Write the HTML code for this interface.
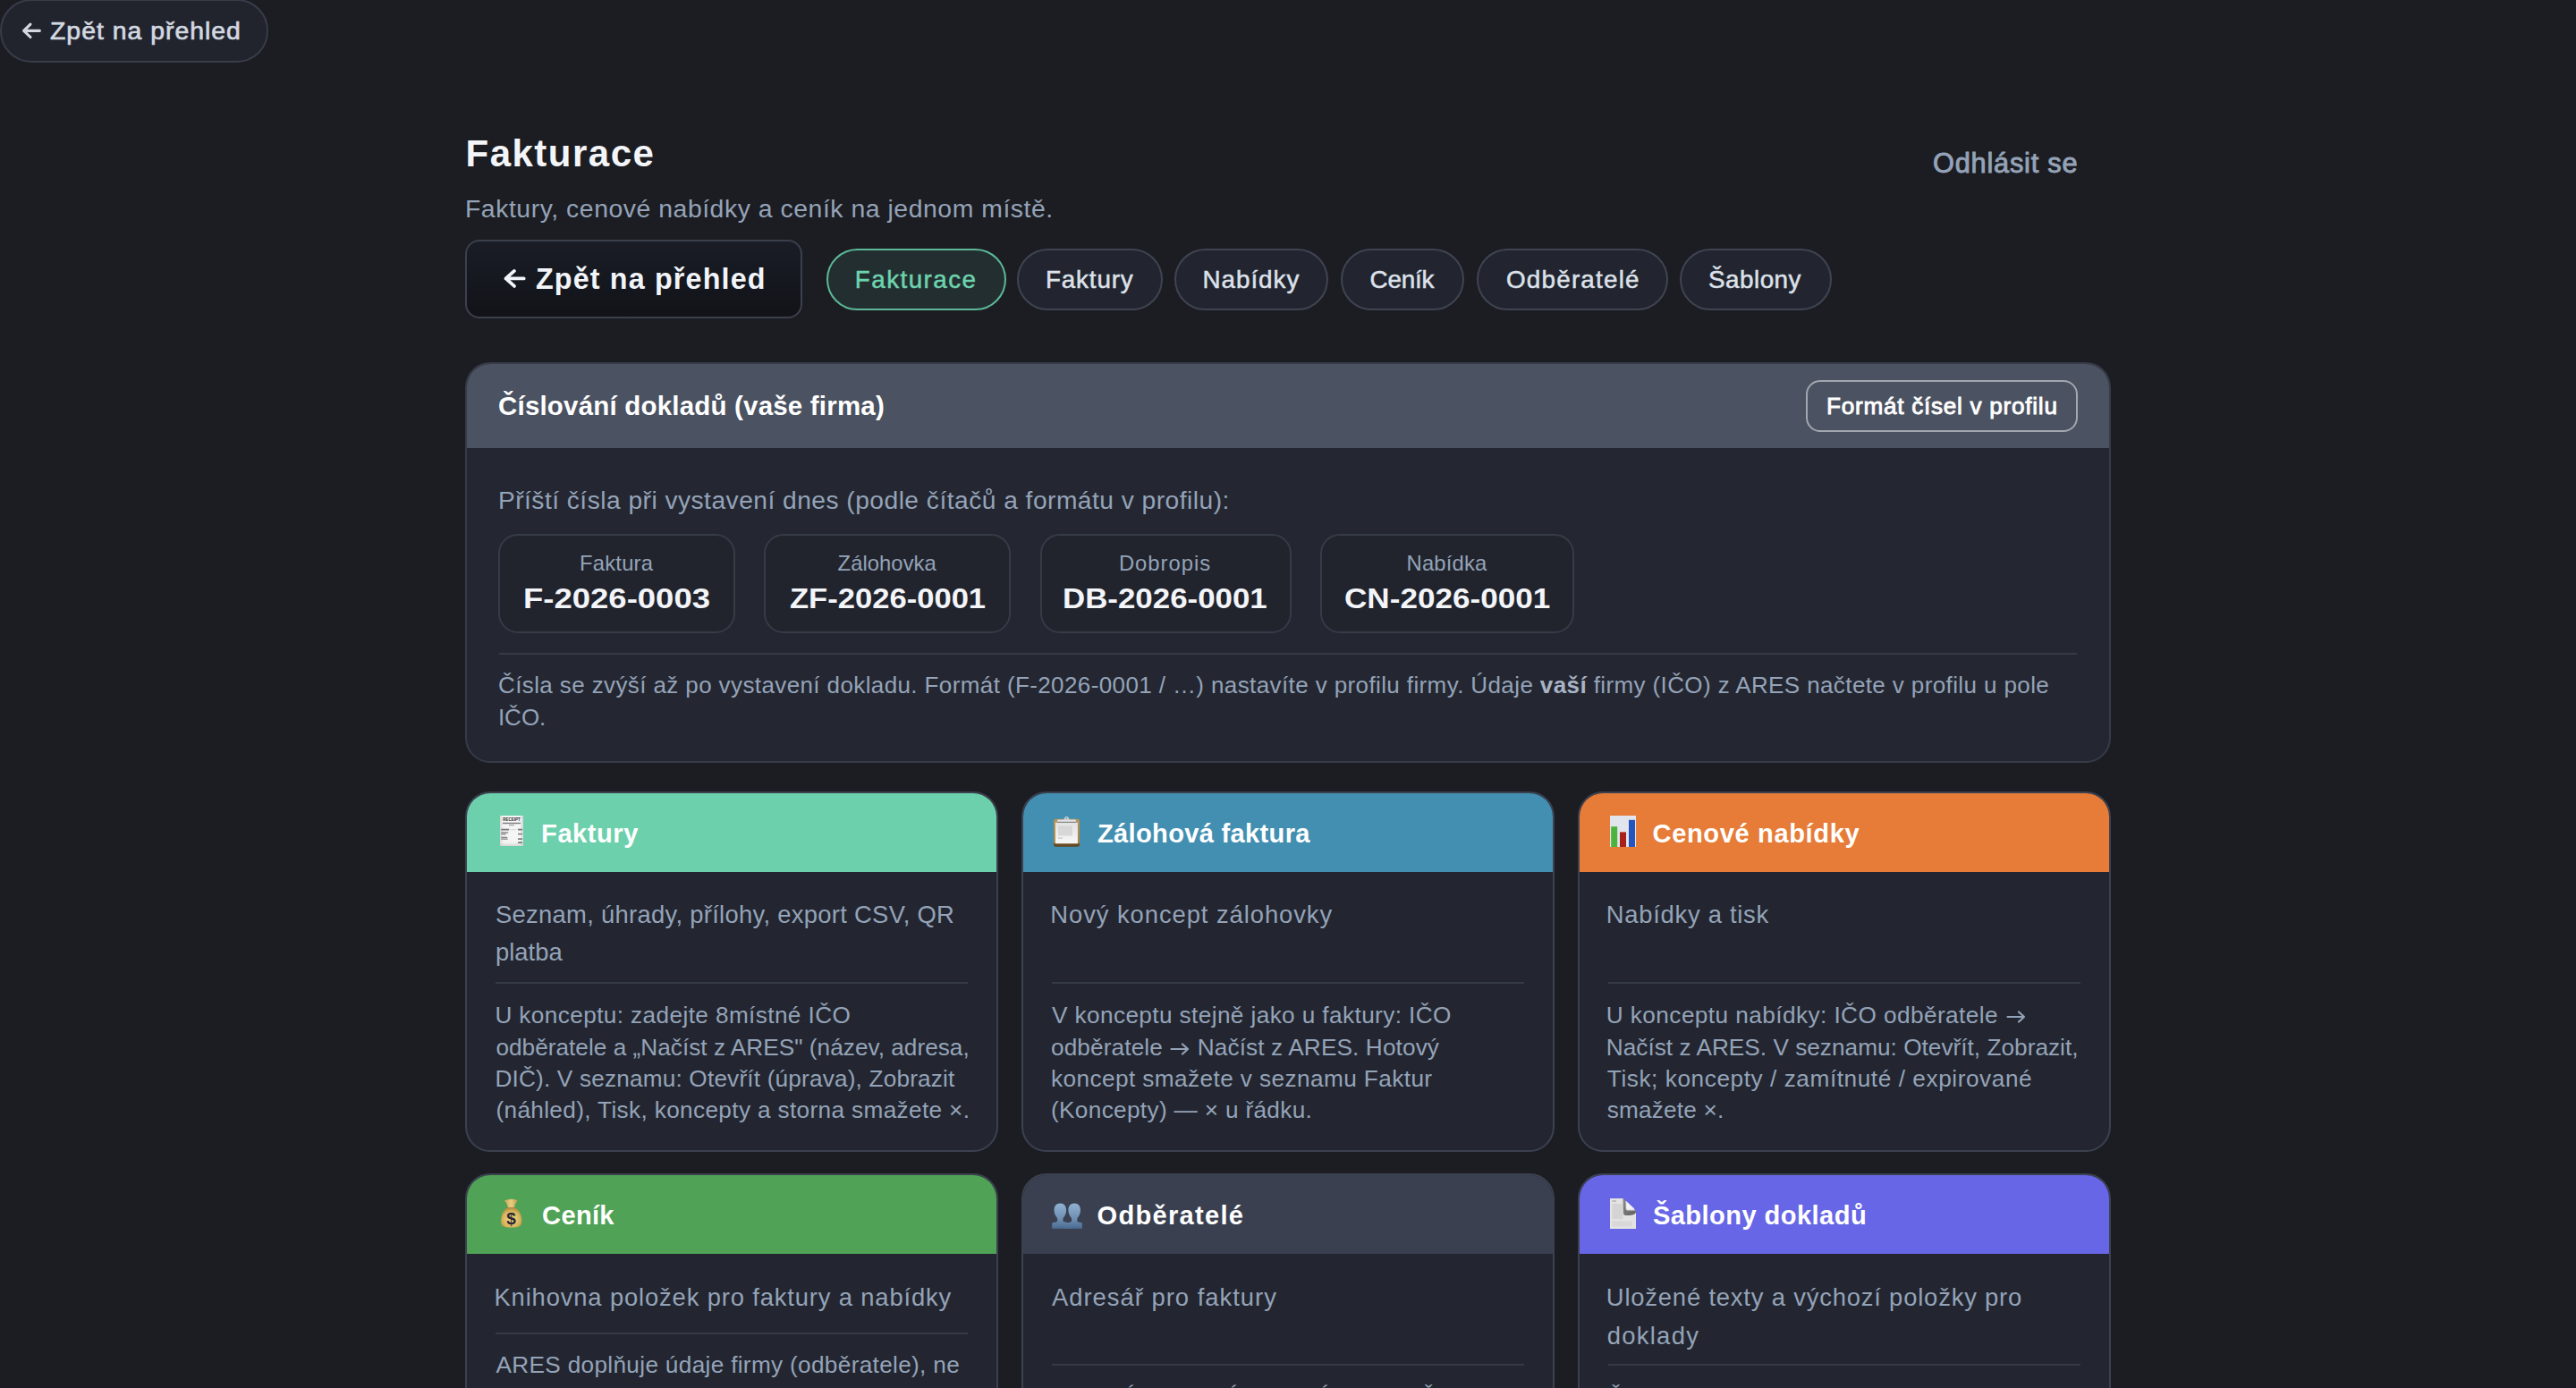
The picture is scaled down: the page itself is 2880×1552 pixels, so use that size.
<!DOCTYPE html>
<html lang="cs">
<head>
<meta charset="utf-8">
<title>Fakturace</title>
<style>
html,body{margin:0;padding:0;}
body{width:2880px;height:1552px;overflow:hidden;background:#1c1d22;font-family:"Liberation Sans",sans-serif;position:relative;}
.a{position:absolute;box-sizing:border-box;}
.x{position:absolute;white-space:nowrap;}
.pill{left:0;top:-1px;width:300px;height:71px;border:2px solid #373c49;border-radius:35px;background:#21242d;}
.backbtn{left:520px;top:268px;width:377px;height:88px;border:2px solid #3b404d;border-radius:16px;background:linear-gradient(180deg,#1a1d26 0%,#111318 100%);}
.tab{top:278px;height:69px;border:2px solid #3f4452;border-radius:35px;background:#22252f;}
.tab.on{background:#232e30;border-color:#5db897;}
.ncard{left:520px;top:405px;width:1840px;height:448px;border:2px solid #363b47;border-radius:28px;background:#242731;overflow:hidden;}
.nhead{left:0;top:0;width:100%;height:94px;background:#4b5261;}
.fmtbtn{left:2019px;top:425px;width:304px;height:57.5px;border:2px solid #a2a7b0;border-radius:16px;}
.nbox{top:597.2px;height:110.4px;border:2px solid #363b48;border-radius:22px;background:#21242d;}
.div{height:2px;background:#353a47;}
.card{width:596.27px;border:2px solid #3c4150;border-radius:28px;background:#232630;overflow:hidden;}
.card .h{position:absolute;left:0;top:0;width:100%;}

#pill{left:56px;top:17.11px;font-size:28.4px;line-height:35.5px;color:#d3d8e0;-webkit-text-stroke:0.7px #d3d8e0;letter-spacing:1px;}
#title{left:520.5px;top:146.1px;font-size:42px;line-height:52.5px;color:#f3f5f9;font-weight:bold;letter-spacing:1.5px;}
#sub{left:520px;top:216.31px;font-size:28.4px;line-height:35.5px;color:#94a3b8;letter-spacing:0.53px;}
#logout{left:2161px;top:164.27px;font-size:30.7px;line-height:38.38px;color:#94a3b8;-webkit-text-stroke:0.9px #94a3b8;letter-spacing:0.8px;}
#back{left:598.9px;top:292.42px;font-size:32.3px;line-height:40.38px;color:#f1f4f8;font-weight:bold;letter-spacing:1.16px;}
#tab0{left:955.8px;top:295.89px;font-size:27.8px;line-height:34.75px;color:#6dd3ae;-webkit-text-stroke:0.5px #6dd3ae;letter-spacing:1.45px;}
#tab1{left:1169px;top:295.89px;font-size:27.8px;line-height:34.75px;color:#dde1ea;-webkit-text-stroke:0.5px #dde1ea;letter-spacing:0.83px;}
#tab2{left:1344.5px;top:295.89px;font-size:27.8px;line-height:34.75px;color:#dde1ea;-webkit-text-stroke:0.5px #dde1ea;letter-spacing:0.97px;}
#tab3{left:1531.6px;top:295.89px;font-size:27.8px;line-height:34.75px;color:#dde1ea;-webkit-text-stroke:0.5px #dde1ea;letter-spacing:-0.2px;}
#tab4{left:1684px;top:295.89px;font-size:27.8px;line-height:34.75px;color:#dde1ea;-webkit-text-stroke:0.5px #dde1ea;letter-spacing:1.22px;}
#tab5{left:1910px;top:295.89px;font-size:27.8px;line-height:34.75px;color:#dde1ea;-webkit-text-stroke:0.5px #dde1ea;letter-spacing:0.5px;}
#nhead{left:557px;top:435.94px;font-size:29.5px;line-height:36.88px;color:#ffffff;font-weight:bold;letter-spacing:0.19px;}
#fmt{left:2042px;top:437.55px;font-size:26.1px;line-height:32.62px;color:#ffffff;-webkit-text-stroke:0.9px #ffffff;letter-spacing:0.75px;}
#nlabel{left:556.9px;top:541.5px;font-size:28.2px;line-height:35.25px;color:#94a3b8;letter-spacing:0.47px;}
#bl0{left:648.1px;top:614.68px;font-size:23.8px;line-height:29.75px;color:#94a3b8;letter-spacing:0.2px;}
#bn0{left:584.9px;top:650.78px;font-size:31px;line-height:38.75px;color:#f3f5f9;font-weight:bold;transform:scaleX(1.1773);transform-origin:0 0;}
#bl1{left:936.6px;top:614.68px;font-size:23.8px;line-height:29.75px;color:#94a3b8;letter-spacing:0.05px;}
#bn1{left:882.7px;top:650.78px;font-size:31px;line-height:38.75px;color:#f3f5f9;font-weight:bold;transform:scaleX(1.1153);transform-origin:0 0;}
#bl2{left:1250.9px;top:614.68px;font-size:23.8px;line-height:29.75px;color:#94a3b8;letter-spacing:1px;}
#bn2{left:1188px;top:650.78px;font-size:31px;line-height:38.75px;color:#f3f5f9;font-weight:bold;transform:scaleX(1.1248);transform-origin:0 0;}
#bl3{left:1572.5px;top:614.68px;font-size:23.8px;line-height:29.75px;color:#94a3b8;letter-spacing:0.2px;}
#bn3{left:1502.6px;top:650.78px;font-size:31px;line-height:38.75px;color:#f3f5f9;font-weight:bold;transform:scaleX(1.1321);transform-origin:0 0;}
#nn1{left:557px;top:749.54px;font-size:26px;line-height:32.5px;color:#94a3b8;letter-spacing:0.39px;}
#nn2{left:556.9px;top:785.54px;font-size:26px;line-height:32.5px;color:#94a3b8;}
#c1t0{left:605.1px;top:913.53px;font-size:29.1px;line-height:36.38px;color:#ffffff;font-weight:bold;letter-spacing:0.53px;}
#c1t1{left:1227px;top:913.53px;font-size:29.1px;line-height:36.38px;color:#ffffff;font-weight:bold;letter-spacing:0.31px;}
#c1t2{left:1847.5px;top:913.53px;font-size:29.1px;line-height:36.38px;color:#ffffff;font-weight:bold;letter-spacing:0.62px;}
#c1d0_0{left:554px;top:1005.98px;font-size:27.4px;line-height:34.25px;color:#94a3b8;letter-spacing:0.29px;}
#c1d0_1{left:554px;top:1048.48px;font-size:27.4px;line-height:34.25px;color:#94a3b8;}
#c1d1_0{left:1174.3px;top:1005.98px;font-size:27.4px;line-height:34.25px;color:#94a3b8;letter-spacing:0.93px;}
#c1d2_0{left:1795.8px;top:1005.98px;font-size:27.4px;line-height:34.25px;color:#94a3b8;letter-spacing:0.72px;}
#c1n0_0{left:553.4px;top:1119.35px;font-size:26.2px;line-height:32.75px;color:#94a3b8;letter-spacing:0.39px;}
#c1n0_1{left:554.4px;top:1154.72px;font-size:26.2px;line-height:32.75px;color:#94a3b8;letter-spacing:0.02px;}
#c1n0_2{left:553.4px;top:1190.09px;font-size:26.2px;line-height:32.75px;color:#94a3b8;letter-spacing:0.18px;}
#c1n0_3{left:554.4px;top:1225.46px;font-size:26.2px;line-height:32.75px;color:#94a3b8;letter-spacing:0.35px;}
#c1n1_0{left:1176px;top:1119.35px;font-size:26.2px;line-height:32.75px;color:#94a3b8;letter-spacing:0.39px;}
#c1n1_1{left:1175px;top:1154.72px;font-size:26.2px;line-height:32.75px;color:#94a3b8;letter-spacing:0.12px;}
#c1n1_2{left:1175px;top:1190.09px;font-size:26.2px;line-height:32.75px;color:#94a3b8;letter-spacing:0.41px;}
#c1n1_3{left:1175px;top:1225.46px;font-size:26.2px;line-height:32.75px;color:#94a3b8;letter-spacing:0.33px;}
#c1n2_0{left:1795.8px;top:1119.35px;font-size:26.2px;line-height:32.75px;color:#94a3b8;letter-spacing:0.43px;}
#c1n2_1{left:1795.8px;top:1154.72px;font-size:26.2px;line-height:32.75px;color:#94a3b8;letter-spacing:0.02px;}
#c1n2_2{left:1796.8px;top:1190.09px;font-size:26.2px;line-height:32.75px;color:#94a3b8;letter-spacing:0.57px;}
#c1n2_3{left:1796.8px;top:1225.46px;font-size:26.2px;line-height:32.75px;color:#94a3b8;letter-spacing:0.18px;}
#c2t0{left:606.1px;top:1340.63px;font-size:29.1px;line-height:36.38px;color:#ffffff;font-weight:bold;letter-spacing:0.3px;}
#c2t1{left:1226.5px;top:1340.63px;font-size:29.1px;line-height:36.38px;color:#ffffff;font-weight:bold;letter-spacing:1.27px;}
#c2t2{left:1847.9px;top:1340.63px;font-size:29.1px;line-height:36.38px;color:#ffffff;font-weight:bold;letter-spacing:0.43px;}
#c2d0_0{left:552.5px;top:1434.28px;font-size:27.4px;line-height:34.25px;color:#94a3b8;letter-spacing:0.84px;}
#c2d1_0{left:1176px;top:1434.28px;font-size:27.4px;line-height:34.25px;color:#94a3b8;letter-spacing:1px;}
#c2d2_0{left:1795.8px;top:1434.28px;font-size:27.4px;line-height:34.25px;color:#94a3b8;letter-spacing:0.81px;}
#c2d2_1{left:1796.8px;top:1476.78px;font-size:27.4px;line-height:34.25px;color:#94a3b8;letter-spacing:1.27px;}
#c2n0_0{left:554.5px;top:1510.05px;font-size:26.2px;line-height:32.75px;color:#94a3b8;letter-spacing:0.32px;}
#c2n1_0{left:1176px;top:1546.45px;font-size:26.2px;line-height:32.75px;color:#94a3b8;}
#c2n2_0{left:1797.4px;top:1546.45px;font-size:26.2px;line-height:32.75px;color:#94a3b8;}
</style>
</head>
<body>

<div class="a pill"></div>
<div class="a backbtn"></div>
<div class="a tab on" style="left:924px;width:200.5px"></div>
<div class="a tab" style="left:1137px;width:163px"></div>
<div class="a tab" style="left:1313px;width:172px"></div>
<div class="a tab" style="left:1499px;width:138px"></div>
<div class="a tab" style="left:1651px;width:214px"></div>
<div class="a tab" style="left:1877.7px;width:170.3px"></div>
<div class="a ncard"><div class="a nhead"></div><div class="a div" style="left:36px;top:323px;width:1764px"></div></div>
<div class="a fmtbtn"></div>
<div class="a nbox" style="left:557.2px;width:264.7px"></div>
<div class="a nbox" style="left:854.3px;width:275.3px"></div>
<div class="a nbox" style="left:1162.5px;width:281.1px"></div>
<div class="a nbox" style="left:1476.4px;width:284.1px"></div>
<div class="a card" style="left:520px;top:885px;height:403px"><div class="h" style="height:88px;background:#6dd0ad"></div><div class="a div" style="left:32px;top:211px;width:528px"></div></div>
<div class="a card" style="left:1141.87px;top:885px;height:403px"><div class="h" style="height:88px;background:#428fb1"></div><div class="a div" style="left:32px;top:211px;width:528px"></div></div>
<div class="a card" style="left:1763.73px;top:885px;height:403px"><div class="h" style="height:88px;background:#e67c37"></div><div class="a div" style="left:32px;top:211px;width:528px"></div></div>
<div class="a card" style="left:520px;top:1312px;height:420px"><div class="h" style="height:88px;background:#4fa256"></div><div class="a div" style="left:32px;top:176px;width:528px"></div></div>
<div class="a card" style="left:1141.87px;top:1312px;height:420px"><div class="h" style="height:88px;background:#3a4050"></div><div class="a div" style="left:32px;top:211px;width:528px"></div></div>
<div class="a card" style="left:1763.73px;top:1312px;height:420px"><div class="h" style="height:88px;background:#6766e6"></div><div class="a div" style="left:32px;top:211px;width:528px"></div></div>
<svg class="x" style="left:20px;top:20px" width="30" height="30" viewBox="0 0 30 30"><path d="M6.6 14.35H24.4M14 7.2L6.6 14.35L14 21.5" fill="none" stroke="#d3d8e0" stroke-width="3.1" stroke-linecap="round" stroke-linejoin="round"/></svg>
<svg class="x" style="left:560px;top:296px" width="30" height="30" viewBox="0 0 30 30"><path d="M5.5 15.4H25.7M15 6.9L5.5 15.4L15 23.9" fill="none" stroke="#f1f4f8" stroke-width="3.8" stroke-linecap="round" stroke-linejoin="round"/></svg>
<svg class="x" style="left:559.3px;top:912.4px" width="26" height="34" viewBox="0 0 26 34">
<defs><linearGradient id="rcg" x1="0" x2="1" y1="0" y2="0"><stop offset="0" stop-color="#d9d9d9"/><stop offset="0.15" stop-color="#f4f4f4"/><stop offset="0.85" stop-color="#f6f6f6"/><stop offset="1" stop-color="#d4d4d4"/></linearGradient>
<linearGradient id="rcv" x1="0" x2="0" y1="0" y2="1"><stop offset="0" stop-color="#fff" stop-opacity="0"/><stop offset="0.8" stop-color="#fff" stop-opacity="0"/><stop offset="1" stop-color="#bdbdbd" stop-opacity="0.6"/></linearGradient></defs>
<rect x="0" y="0" width="26" height="34" fill="url(#rcg)"/>
<rect x="0" y="0" width="26" height="34" fill="url(#rcv)"/>
<text x="13" y="6.4" text-anchor="middle" font-family="Liberation Sans" font-weight="bold" font-size="5" textLength="19.5" lengthAdjust="spacingAndGlyphs" fill="#2e2e2e">RECEIPT</text>
<rect x="3" y="7.8" width="20" height="1.4" fill="#7a7a7a"/>
<rect x="10" y="10.3" width="6" height="0.9" fill="#8a8a8a"/>
<rect x="1.2" y="14.7" width="9" height="1.8" fill="#7a7a7a"/><rect x="11.5" y="15.6" width="7" height="0.5" fill="#bbb"/><rect x="20" y="14.7" width="5" height="1.8" fill="#7a7a7a"/>
<rect x="1.2" y="18.2" width="8" height="1.4" fill="#8a8a8a"/><rect x="1.2" y="20" width="5.5" height="1.3" fill="#8a8a8a"/><rect x="20" y="19.8" width="5" height="1.5" fill="#7a7a7a"/>
<rect x="1.2" y="23.7" width="7" height="1.4" fill="#8a8a8a"/><rect x="1.2" y="25.5" width="7.5" height="1.3" fill="#8a8a8a"/><rect x="20" y="25.3" width="5" height="1.6" fill="#7a7a7a"/>
<rect x="20" y="29.3" width="5" height="1.7" fill="#7a7a7a"/>
</svg>
<svg class="x" style="left:1178px;top:911.5px" width="29" height="35" viewBox="0 0 29 35">
<defs><linearGradient id="cbg" x1="0" x2="0" y1="0" y2="1"><stop offset="0" stop-color="#b99457"/><stop offset="0.85" stop-color="#a98445"/><stop offset="0.9" stop-color="#6e4f25"/><stop offset="1" stop-color="#5f4320"/></linearGradient>
<linearGradient id="cpg" x1="0" x2="0" y1="0" y2="1"><stop offset="0" stop-color="#e2e2e2"/><stop offset="1" stop-color="#f7f7f7"/></linearGradient></defs>
<rect x="0" y="3.8" width="29" height="31" rx="2.5" fill="url(#cbg)"/>
<rect x="1.9" y="7.7" width="25" height="23.5" fill="url(#cpg)"/>
<rect x="5" y="11.5" width="16" height="11" fill="#cfcfcf" opacity="0.7"/>
<rect x="5" y="24.5" width="5" height="1.2" fill="#c4c4c4"/>
<path d="M11 4.5 L13 1.5 A1.8 1.8 0 0 1 16 1.5 L18 4.5 Z" fill="#cdd2da"/>
<circle cx="14.5" cy="2.6" r="0.8" fill="#4d8fb3"/>
<rect x="4" y="4.4" width="21" height="3.3" rx="1" fill="#dfe3ea"/>
<rect x="4" y="6.8" width="21" height="1.2" fill="#8a8580"/>
</svg>
<svg class="x" style="left:1800px;top:912px" width="29" height="35" viewBox="0 0 29 35">
<defs><linearGradient id="chg" x1="0" x2="1" y1="0" y2="1"><stop offset="0" stop-color="#dfe4ee"/><stop offset="1" stop-color="#e6e6ea"/></linearGradient></defs>
<rect x="0" y="0" width="29" height="35" fill="url(#chg)"/>
<rect x="1.2" y="12.2" width="7" height="22.8" fill="#4cb33c"/>
<rect x="11" y="18.4" width="7" height="16.6" fill="#a7221a"/>
<rect x="21" y="4.8" width="7" height="30.2" fill="#2455bf"/>
</svg>
<svg class="x" style="left:559px;top:1339.5px" width="26" height="33" viewBox="0 0 26 33">
<defs><radialGradient id="mbg" cx="0.5" cy="0.6" r="0.6"><stop offset="0" stop-color="#f3dc82"/><stop offset="0.7" stop-color="#d6b35c"/><stop offset="1" stop-color="#ad8540"/></radialGradient>
<linearGradient id="mtg" x1="0" x2="1"><stop offset="0" stop-color="#c9a35a"/><stop offset="0.5" stop-color="#e9cf80"/><stop offset="1" stop-color="#c29a50"/></linearGradient></defs>
<path d="M9 10.3 C8.5 7.5 7 4.5 4.8 2.2 L9.5 1.3 L13 0.8 L16.5 1.3 L19.7 2.2 C18 4.5 16.4 7.5 16 10.3 Z" fill="url(#mtg)"/>
<path d="M9 10 C4 12 1 18.5 1 26.5 C1 31 4 32.5 12.7 32.5 C21.5 32.5 24.4 31 24.4 26.5 C24.4 18.5 21.5 12 16 10 Z" fill="url(#mbg)"/>
<text x="12.5" y="29" text-anchor="middle" font-family="Liberation Sans" font-weight="bold" font-size="19" fill="#2a2433">$</text>
</svg>
<svg class="x" style="left:1175.5px;top:1345px" width="34" height="29" viewBox="0 0 34 29">
<defs><linearGradient id="bsg" gradientUnits="userSpaceOnUse" x1="0" x2="0" y1="0" y2="29"><stop offset="0" stop-color="#92b3d3"/><stop offset="0.6" stop-color="#6f8fb3"/><stop offset="1" stop-color="#4a6a91"/></linearGradient></defs>
<g fill="url(#bsg)">
<path d="M9.3 0.6C13.6 0.6 16.1 3.6 16.1 8.2C16.1 11.6 14.6 14.6 12.6 17L12.4 20.4C14.2 21.4 17 21.8 20 22L21.5 28.7H0.2V23.2C0.2 22.3 1 22 2 21.9C4 21.7 5.9 21.2 6.2 20.4L6 17C4 14.6 2.5 11.6 2.5 8.2C2.5 3.6 5 0.6 9.3 0.6Z"/>
<path d="M25.2 0.6C29.5 0.6 32 3.6 32 8.2C32 11.6 30.5 14.6 28.5 17L28.3 20.4C28.6 21.2 30.5 21.7 32.2 21.9C33.2 22 33.9 22.3 33.9 23.2V28.7H12.5L14 23C16.5 22.3 21.5 21.6 22.1 20.4L21.9 17C19.9 14.6 18.4 11.6 18.4 8.2C18.4 3.6 20.9 0.6 25.2 0.6Z"/>
</g>
</svg>
<svg class="x" style="left:1800px;top:1339.5px" width="29" height="34" viewBox="0 0 29 34">
<defs><linearGradient id="pcg" x1="0" x2="1" y1="0" y2="1"><stop offset="0" stop-color="#7a7a7a"/><stop offset="1" stop-color="#4a4a4a"/></linearGradient></defs>
<path d="M0 0 H14.5 L29 14 V34 H0 Z" fill="#e3e3e3"/>
<rect x="2.5" y="2.5" width="4.5" height="1" fill="#9a9a9a"/>
<rect x="2.5" y="6" width="12" height="17" fill="#c9c9c9" opacity="0.55"/>
<rect x="2.5" y="25.5" width="22" height="6" fill="#cdcdcd" opacity="0.5"/>
<path d="M14.5 0 C17 0.5 17.6 2.5 17.6 5 V11 C17.6 12.5 18.5 13.6 20.5 13.6 H29 V14.5 C29 18 25 19 20 19 H17.5 C16 19 15 18 15 16.5 Z" fill="url(#pcg)" opacity="0.85"/>
<path d="M18.2 3 L27.5 11.8 L19 11.8 Z" fill="#f3f3f3"/>
</svg>

<div class="x" id="pill">Zpět na přehled</div>
<div class="x" id="title">Fakturace</div>
<div class="x" id="sub">Faktury, cenové nabídky a ceník na jednom místě.</div>
<div class="x" id="logout">Odhlásit se</div>
<div class="x" id="back">Zpět na přehled</div>
<div class="x" id="tab0">Fakturace</div>
<div class="x" id="tab1">Faktury</div>
<div class="x" id="tab2">Nabídky</div>
<div class="x" id="tab3">Ceník</div>
<div class="x" id="tab4">Odběratelé</div>
<div class="x" id="tab5">Šablony</div>
<div class="x" id="nhead">Číslování dokladů (vaše firma)</div>
<div class="x" id="fmt">Formát čísel v profilu</div>
<div class="x" id="nlabel">Příští čísla při vystavení dnes (podle čítačů a formátu v profilu):</div>
<div class="x" id="bl0">Faktura</div>
<div class="x" id="bn0">F-2026-0003</div>
<div class="x" id="bl1">Zálohovka</div>
<div class="x" id="bn1">ZF-2026-0001</div>
<div class="x" id="bl2">Dobropis</div>
<div class="x" id="bn2">DB-2026-0001</div>
<div class="x" id="bl3">Nabídka</div>
<div class="x" id="bn3">CN-2026-0001</div>
<div class="x" id="nn1">Čísla se zvýší až po vystavení dokladu. Formát (F-2026-0001 / …) nastavíte v profilu firmy. Údaje <b style="color:#a8b3c5">vaší</b> firmy (IČO) z ARES načtete v profilu u pole</div>
<div class="x" id="nn2">IČO.</div>
<div class="x" id="c1t0">Faktury</div>
<div class="x" id="c1t1">Zálohová faktura</div>
<div class="x" id="c1t2">Cenové nabídky</div>
<div class="x" id="c1d0_0">Seznam, úhrady, přílohy, export CSV, QR</div>
<div class="x" id="c1d0_1">platba</div>
<div class="x" id="c1d1_0">Nový koncept zálohovky</div>
<div class="x" id="c1d2_0">Nabídky a tisk</div>
<div class="x" id="c1n0_0">U konceptu: zadejte 8místné IČO</div>
<div class="x" id="c1n0_1">odběratele a „Načíst z ARES" (název, adresa,</div>
<div class="x" id="c1n0_2">DIČ). V seznamu: Otevřít (úprava), Zobrazit</div>
<div class="x" id="c1n0_3">(náhled), Tisk, koncepty a storna smažete ×.</div>
<div class="x" id="c1n1_0">V konceptu stejně jako u faktury: IČO</div>
<div class="x" id="c1n1_1">odběratele <svg width="22" height="14" viewBox="0 0 22 14" style="vertical-align:0px;margin:0 1px"><path d="M1.5 7H20M14 1.5L20 7L14 12.5" fill="none" stroke="#94a3b8" stroke-width="2.2" stroke-linecap="round" stroke-linejoin="round"/></svg> Načíst z ARES. Hotový</div>
<div class="x" id="c1n1_2">koncept smažete v seznamu Faktur</div>
<div class="x" id="c1n1_3">(Koncepty) — × u řádku.</div>
<div class="x" id="c1n2_0">U konceptu nabídky: IČO odběratele <svg width="22" height="14" viewBox="0 0 22 14" style="vertical-align:0px;margin:0 1px"><path d="M1.5 7H20M14 1.5L20 7L14 12.5" fill="none" stroke="#94a3b8" stroke-width="2.2" stroke-linecap="round" stroke-linejoin="round"/></svg></div>
<div class="x" id="c1n2_1">Načíst z ARES. V seznamu: Otevřít, Zobrazit,</div>
<div class="x" id="c1n2_2">Tisk; koncepty / zamítnuté / expirované</div>
<div class="x" id="c1n2_3">smažete ×.</div>
<div class="x" id="c2t0">Ceník</div>
<div class="x" id="c2t1">Odběratelé</div>
<div class="x" id="c2t2">Šablony dokladů</div>
<div class="x" id="c2d0_0">Knihovna položek pro faktury a nabídky</div>
<div class="x" id="c2d1_0">Adresář pro faktury</div>
<div class="x" id="c2d2_0">Uložené texty a výchozí položky pro</div>
<div class="x" id="c2d2_1">doklady</div>
<div class="x" id="c2n0_0">ARES doplňuje údaje firmy (odběratele), ne</div>
<div class="x" id="c2n1_0"><span style="position:absolute;left:84px">Í</span><span style="position:absolute;left:199px">Í</span><span style="position:absolute;left:301px">Í</span><span style="position:absolute;left:411px">Č</span>&nbsp;</div>
<div class="x" id="c2n2_0">Šablony použijete v konceptu faktury i nabídky</div>

</body>
</html>
